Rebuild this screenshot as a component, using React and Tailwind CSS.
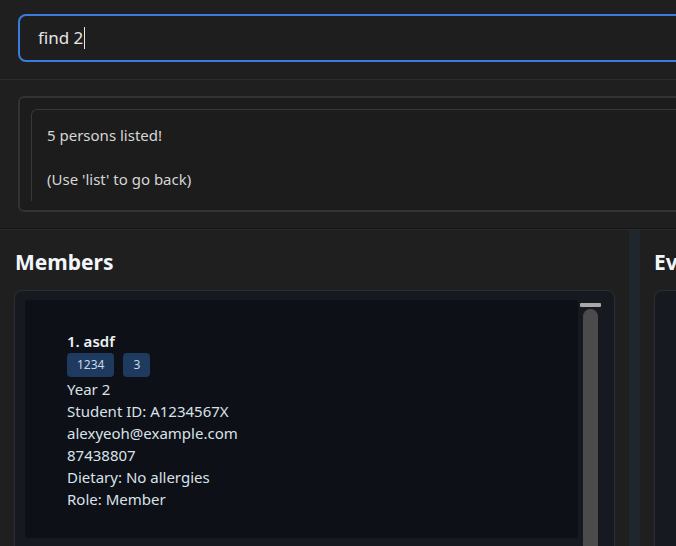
export default function App() {
  const lines = [
    'Year 2',
    'Student ID: A1234567X',
    'alexyeoh@example.com',
    '87438807',
    'Dietary: No allergies',
    'Role: Member',
  ];

  return (
    <div className="w-[676px] h-[546px] overflow-hidden bg-[#1f1f1f] text-[#d4d4d4]" style={{ fontFamily: '"Noto Sans", "Open Sans", sans-serif' }}>
      <div className="w-[1000px]">
        {/* command box */}
        <div className="h-[80px] border-b border-[#2c2c2c] pt-[14px] pl-[18px]">
          <div className="h-[48px] rounded-[8px] border-2 border-[#3a7be0] bg-[#1e1e1e] flex items-center pl-[18px] text-[17px] text-[#e6e6e6]">
            find 2<span className="ml-[1px] inline-block w-px h-[22px] bg-[#e6e6e6]" />
          </div>
        </div>

        {/* result display */}
        <div className="h-[149px] border-b border-[#141414] pt-[16px] pl-[18px]">
          <div className="h-[116px] rounded-[6px] border-2 border-[#333333] bg-[#1c1c1c] pt-[11px] pl-[11px]">
            <div className="h-[92px] rounded-tl-[6px] border-t border-l border-[#34383d] pl-[15px] pt-[14px] text-[15px] leading-[22px] text-[#d6d6d6]">
              <div>5 persons listed!</div>
              <div className="mt-[22px]">(Use 'list' to go back)</div>
            </div>
          </div>
        </div>

        {/* panels */}
        <div className="flex border-t border-[#2a2a2a]">
          <div className="w-[629px] shrink-0 pl-[14px] pt-[17px]">
            <div className="pl-[1px] text-[21px] font-bold text-[#f2f6fa] leading-[30px]">Members</div>
            <div className="mt-[13px] w-[601px] h-[300px] rounded-[8px] border border-[#2a2f37] bg-[#161a20] pt-[9px] pl-[10px] flex">
              <div className="w-[553px] h-[238px] rounded-[3px] bg-[#0d1017] pl-[42px] pt-[30px] text-[15px] leading-[22px] text-[#dbe1e8]">
                <div className="font-semibold text-[#eef1f4]">1. asdf</div>
                <div className="flex gap-[9px] my-[1px]">
                  <span className="h-[24px] px-[10px] rounded-[4px] bg-[#1e3a5f] text-[12px] leading-[24px] text-[#c9d8ea]">1234</span>
                  <span className="h-[24px] px-[10px] rounded-[4px] bg-[#1e3a5f] text-[12px] leading-[24px] text-[#c9d8ea]">3</span>
                </div>
                {lines.map((l) => (
                  <div key={l}>{l}</div>
                ))}
              </div>
              <div className="ml-[2px] w-[21px] flex flex-col items-center pt-[3px]">
                <div className="w-[21px] h-[4px] rounded-[1px] bg-[#a9a9a9]" />
                <div className="mt-[2px] w-[15px] h-[260px] rounded-full bg-[#4b4b4b]" />
              </div>
            </div>
          </div>
          <div className="w-[11px] shrink-0 bg-[#20262d]" />
          <div className="flex-1 pl-[14px] pt-[17px]">
            <div className="text-[21px] font-bold text-[#f2f6fa] leading-[30px]">Events</div>
            <div className="mt-[13px] h-[300px] rounded-[8px] border border-[#2a2f37] bg-[#161a20]" />
          </div>
        </div>
      </div>
    </div>
  );
}
